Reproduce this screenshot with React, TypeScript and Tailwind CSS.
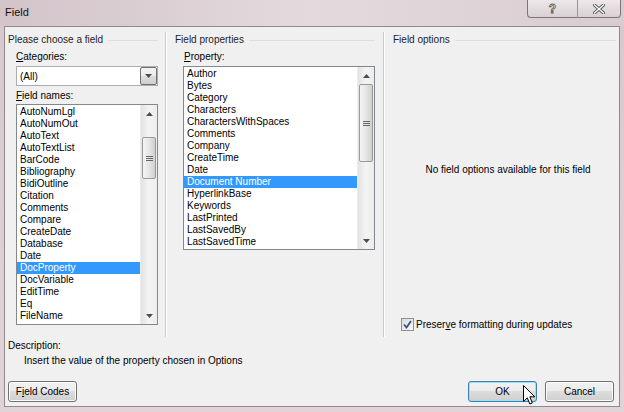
import type { ReactNode } from 'react';

const fieldNames = [
  'AutoNumLgl',
  'AutoNumOut',
  'AutoText',
  'AutoTextList',
  'BarCode',
  'Bibliography',
  'BidiOutline',
  'Citation',
  'Comments',
  'Compare',
  'CreateDate',
  'Database',
  'Date',
  'DocProperty',
  'DocVariable',
  'EditTime',
  'Eq',
  'FileName',
];

const properties = [
  'Author',
  'Bytes',
  'Category',
  'Characters',
  'CharactersWithSpaces',
  'Comments',
  'Company',
  'CreateTime',
  'Date',
  'Document Number',
  'HyperlinkBase',
  'Keywords',
  'LastPrinted',
  'LastSavedBy',
  'LastSavedTime',
];

const btnFace = 'bg-[linear-gradient(#f2f2f2,#ebebeb_50%,#dddddd_50%,#cfcfcf)]';

function Arrow({ up }: { up?: boolean }) {
  return (
    <svg width="7" height="4" viewBox="0 0 7 4">
      <path d={up ? 'M0 4 L3.5 0 L7 4 Z' : 'M0 0 L7 0 L3.5 4 Z'} fill="#4d4d4d" />
    </svg>
  );
}

function ScrollBar({ thumbTop, thumbHeight }: { thumbTop: number; thumbHeight: number }) {
  return (
    <div className="w-[17px] flex flex-col bg-linear-to-r from-[#e3e3e3] via-[#f4f4f4] to-[#ececec] border-l border-[#ececec]">
      <div className="h-[17px] flex items-center justify-center shrink-0">
        <Arrow up />
      </div>
      <div className="shrink-0" style={{ height: thumbTop - 17 }} />
      <div
        className="mx-px rounded-[2px] border border-[#999] bg-linear-to-r from-[#f5f5f5] via-[#e6e6e6] to-[#cfcfcf] flex flex-col items-center justify-center gap-px shrink-0"
        style={{ height: thumbHeight }}
      >
        <div className="w-[7px] h-px bg-[#666]" />
        <div className="w-[7px] h-px bg-[#666]" />
        <div className="w-[7px] h-px bg-[#666]" />
      </div>
      <div className="flex-1" />
      <div className="h-[17px] flex items-center justify-center shrink-0">
        <Arrow />
      </div>
    </div>
  );
}

function ListBox({
  items,
  selected,
  className,
  thumbTop,
  thumbHeight,
}: {
  items: string[];
  selected: string;
  className: string;
  thumbTop: number;
  thumbHeight: number;
}) {
  return (
    <div className={`flex border border-[#828790] bg-white ${className}`}>
      <div className="flex-1 min-w-0 pt-px overflow-hidden">
        {items.map(it => (
          <div
            key={it}
            className={`h-[12px] leading-[12px] pl-[3px] whitespace-nowrap ${
              it === selected ? 'bg-[#3399ff] text-white' : ''
            }`}
          >
            {it}
          </div>
        ))}
      </div>
      <ScrollBar thumbTop={thumbTop} thumbHeight={thumbHeight} />
    </div>
  );
}

function GroupHeader({ title, className }: { title: string; className: string }) {
  return (
    <div className={`flex items-center h-[12px] leading-[12px] ${className}`}>
      <span className="whitespace-nowrap text-[#1e1e1e]">{title}</span>
      <div className="flex-1 h-px ml-[5px] bg-[#dedede]" />
    </div>
  );
}

function Button({ children, focused, className = '' }: { children: ReactNode; focused?: boolean; className?: string }) {
  return (
    <div
      className={`w-[69px] h-[21px] rounded-[3px] border flex items-center justify-center ${btnFace} ${
        focused
          ? 'border-[#3c7fb1] shadow-[inset_0_0_0_1px_#9fdcf5]'
          : 'border-[#707070] shadow-[inset_0_0_0_1px_#fcfcfc]'
      } ${className}`}
    >
      {children}
    </div>
  );
}

function Separator() {
  return <div className="w-[2px] mt-[5px] border-l border-[#cacaca] border-r border-r-white" />;
}

export default function App() {
  return (
    <div className="relative w-[624px] h-[412px] flex flex-col overflow-hidden bg-linear-to-b from-[#d6c8ce] to-[#e2d4d6] font-['Liberation_Sans',Arial,sans-serif] text-[10px] text-black select-none">
      {/* title bar */}
      <div className="h-[26px] flex items-start shrink-0 bg-linear-to-r from-[#d3c4ca] via-[#e4dadd] to-[#d9ccd1]">
        <div className="pl-[5px] pt-[6px] h-[12px] leading-[12px] text-[11px] text-[#111]">Field</div>
        <div className="ml-auto mr-[3px] -mt-px flex h-[19px]">
          <div className="w-[51px] rounded-bl-[4px] border border-[#7d7479] border-r-[#9b9297] bg-linear-to-b from-[#eee8ea] to-[#d9d0d4] flex items-center justify-center">
            <span className="text-[12px] leading-none font-bold text-[#f5f5f5] [-webkit-text-stroke:0.8px_#555]">?</span>
          </div>
          <div className="w-[43px] rounded-br-[4px] border border-l-0 border-[#7d7479] bg-linear-to-b from-[#eee8ea] to-[#d9d0d4] flex items-center justify-center">
            <svg width="12" height="10" viewBox="0 0 12 10">
              <path d="M1.5 1 L10.5 9 M10.5 1 L1.5 9" stroke="#555" strokeWidth="3.2" strokeLinecap="square" />
              <path d="M1.5 1 L10.5 9 M10.5 1 L1.5 9" stroke="#fafafa" strokeWidth="1.4" strokeLinecap="square" />
            </svg>
          </div>
        </div>
      </div>

      {/* client area */}
      <div className="flex-1 mx-[4px] mb-[5px] border border-[#8f8a8d] bg-[#f0f0f0] flex flex-col">
        <div className="h-[310px] flex shrink-0">
          {/* left group */}
          <div className="w-[160px] flex flex-col pt-[7px]">
            <GroupHeader title="Please choose a field" className="pl-[3px] pr-[7px]" />
            <div className="mt-[5px] ml-[11px] h-[12px] leading-[12px]">
              <span className="underline">C</span>ategories:
            </div>
            <div className="mt-[3px] ml-[11px] w-[142px] h-[20px] flex border border-[#abadb3] bg-white">
              <div className="flex-1 pl-[3px] flex items-center">(All)</div>
              <div className={`w-[17px] border border-[#707070] rounded-[2px] flex items-center justify-center ${btnFace}`}>
                <Arrow />
              </div>
            </div>
            <div className="mt-[4px] ml-[11px] h-[12px] leading-[12px]">
              <span className="underline">F</span>ield names:
            </div>
            <ListBox
              items={fieldNames}
              selected="DocProperty"
              className="mt-[2px] ml-[11px] w-[142px] h-[221px]"
              thumbTop={32}
              thumbHeight={42}
            />
          </div>

          <Separator />

          {/* middle group */}
          <div className="w-[216px] flex flex-col pt-[7px]">
            <GroupHeader title="Field properties" className="pl-[8px] pr-[8px]" />
            <div className="mt-[5px] ml-[17px] h-[12px] leading-[12px]">
              <span className="underline">P</span>roperty:
            </div>
            <ListBox
              items={properties}
              selected="Document Number"
              className="mt-[3px] ml-[16px] w-[192px] h-[184px]"
              thumbTop={17}
              thumbHeight={78}
            />
          </div>

          <Separator />

          {/* right group */}
          <div className="flex-1 flex flex-col pt-[7px]">
            <GroupHeader title="Field options" className="pl-[8px] pr-[3px]" />
            <div className="mt-[118px] h-[12px] leading-[12px] text-center pl-[12px]">
              No field options available for this field
            </div>
            <div className="mt-[142px] ml-[16px] flex items-center h-[13px]">
              <div className="w-[13px] h-[13px] border border-[#8e8f8f] bg-linear-to-br from-[#dcdcdc] to-[#f8f8f8] flex items-center justify-center">
                <svg width="9" height="9" viewBox="0 0 9 9">
                  <path d="M1 4.5 L3.5 7.5 L8 1" stroke="#3d4f8a" strokeWidth="1.8" fill="none" />
                </svg>
              </div>
              <span className="ml-[2px] leading-[12px]">
                Preser<span className="underline">v</span>e formatting during updates
              </span>
            </div>
          </div>
        </div>

        {/* description */}
        <div className="mt-[3px] pl-[3px] h-[12px] leading-[12px]">Description:</div>
        <div className="mt-[3px] pl-[19px] h-[12px] leading-[12px]">Insert the value of the property chosen in Options</div>

        {/* buttons */}
        <div className="mt-[14px] pl-[3px] pr-[5px] flex">
          <Button>
            F<span className="underline">i</span>eld Codes
          </Button>
          <div className="ml-auto flex gap-[8px]">
            <Button focused>OK</Button>
            <Button>Cancel</Button>
          </div>
        </div>
      </div>

      {/* mouse pointer */}
      <svg className="absolute left-[523px] top-[385px]" width="13" height="21" viewBox="0 0 13 21">
        <path d="M0.5 0.5 L0.5 16.5 L4.3 12.8 L6.8 19 L9.3 18 L6.8 11.8 L11.8 11.8 Z" fill="#fff" stroke="#000" strokeWidth="1" />
      </svg>
    </div>
  );
}
